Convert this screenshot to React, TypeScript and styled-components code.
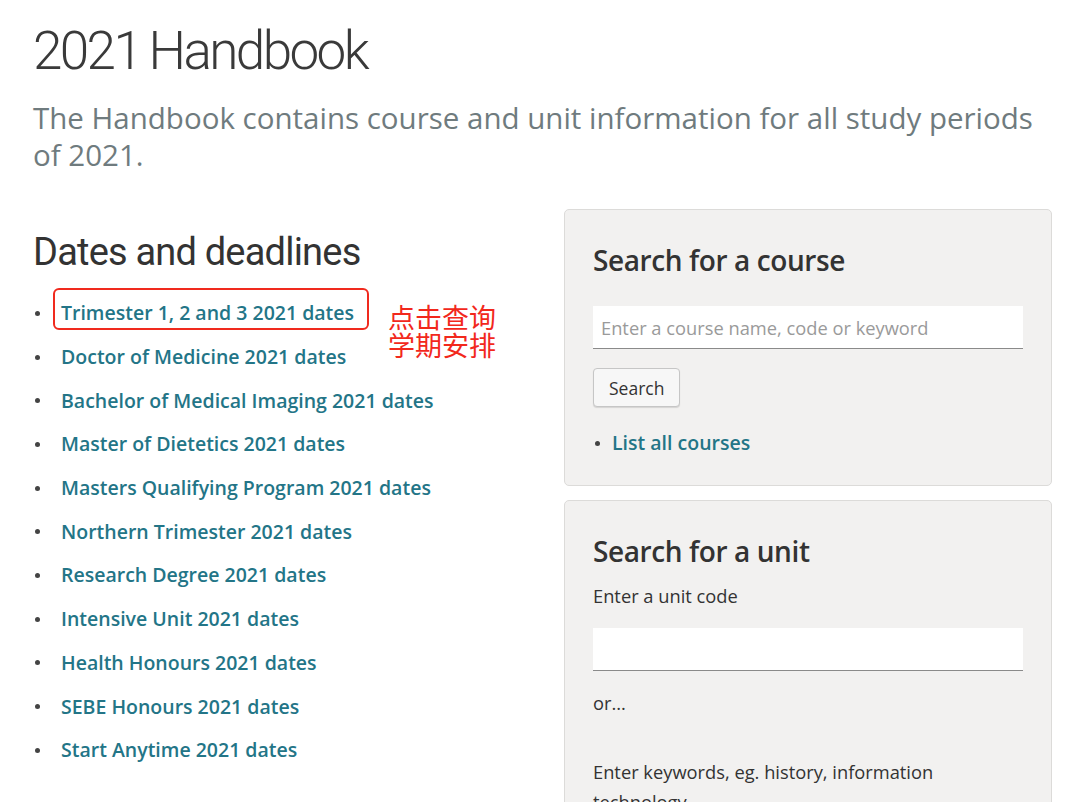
import React from 'react'
import styled, { createGlobalStyle } from 'styled-components'

const GlobalStyle = createGlobalStyle`
  html, body {
    margin: 0;
    padding: 0;
    background: #ffffff;
  }
  body {
    font-family: 'Open Sans', 'Noto Sans', sans-serif;
    color: #333333;
  }
`

const Page = styled.div`
  width: 1071px;
  height: 802px;
  overflow: hidden;
  box-sizing: border-box;
  padding: 19px 19px 0 33px;
`

const Title = styled.h1`
  margin: 0;
  font-family: 'Roboto', 'Liberation Sans', sans-serif;
  font-weight: 300;
  font-size: 53px;
  line-height: 64px;
  letter-spacing: -2.6px;
  word-spacing: -2px;
  color: #3a3a3a;
`

const Lead = styled.p`
  margin: 16px 0 0;
  font-size: 29.5px;
  line-height: 37px;
  color: #6f7b7e;
`

const Columns = styled.div`
  display: grid;
  grid-template-columns: 1fr 488px;
  column-gap: 24px;
  margin-top: 36px;
`

const LeftColumn = styled.section`
  padding-top: 19px;
`

const SectionTitle = styled.h2`
  margin: 0;
  font-family: 'Roboto', 'Liberation Sans', sans-serif;
  font-weight: 400;
  font-size: 38px;
  line-height: 48px;
  letter-spacing: -0.8px;
  color: #333333;
`

const LinkList = styled.ul`
  list-style: none;
  margin: 15px 0 0;
  padding: 0;
`

const LinkItem = styled.li<{ $tight?: boolean }>`
  position: relative;
  display: flex;
  align-items: center;
  height: 43.7px;
  padding-left: ${(p) => (p.$tight ? '19px' : '28px')};

  &::before {
    content: '';
    position: absolute;
    left: 2px;
    top: 50%;
    width: 5px;
    height: 5px;
    margin-top: -2px;
    border-radius: 50%;
    background: #444444;
  }
`

const DateLink = styled.a`
  font-size: 19.5px;
  font-weight: 600;
  color: #237587;
  text-decoration: none;
  white-space: nowrap;
`

const Highlight = styled.div`
  position: absolute;
  left: 20px;
  top: -3px;
  width: 312px;
  height: 38px;
  border: 2.5px solid #f02a1e;
  border-radius: 6px;
  pointer-events: none;
`

const Note = styled.div`
  position: absolute;
  left: 355px;
  top: 12px;
  font-family: 'Noto Sans CJK SC', sans-serif;
  font-size: 27px;
  line-height: 28px;
  color: #f2281c;
  white-space: nowrap;
`

const Sidebar = styled.aside`
  display: flex;
  flex-direction: column;
  gap: 14px;
`

const Panel = styled.div`
  background: #f2f1f0;
  border: 1px solid #dcdbd9;
  border-radius: 5px;
  padding: 30px 28px 20px 28px;
`

const PanelTitle = styled.h3`
  margin: 0;
  font-size: 28px;
  line-height: 40px;
  font-weight: 600;
  letter-spacing: -0.4px;
  color: #333333;
`

const TextField = styled.input<{ $gap?: number }>`
  display: block;
  box-sizing: border-box;
  width: 430px;
  height: 43px;
  margin-top: ${(p) => p.$gap ?? 26}px;
  padding: 0 8px;
  border: none;
  border-bottom: 1.5px solid #8a8a8a;
  background: #ffffff;
  font-family: 'Open Sans', sans-serif;
  font-size: 18.3px;
  color: #333333;
  outline: none;

  &::placeholder {
    color: #9a9a9a;
  }
`

const Button = styled.button`
  display: block;
  margin-top: 19px;
  height: 39px;
  padding: 0 15px;
  border: 1px solid #c6c6c6;
  border-radius: 4px;
  background: #f7f7f7;
  box-shadow: 0 1px 1px rgba(0, 0, 0, 0.12);
  font-family: 'Open Sans', sans-serif;
  font-size: 17.5px;
  color: #333333;
`

const PanelList = styled.ul`
  list-style: none;
  margin: 14px 0 0;
  padding: 0;
`

const Label = styled.p<{ $gap?: number }>`
  margin: ${(p) => p.$gap ?? 0}px 0 0;
  font-size: 18.3px;
  line-height: 30px;
  color: #333333;
`

const dates = [
  'Trimester 1, 2 and 3 2021 dates',
  'Doctor of Medicine 2021 dates',
  'Bachelor of Medical Imaging 2021 dates',
  'Master of Dietetics 2021 dates',
  'Masters Qualifying Program 2021 dates',
  'Northern Trimester 2021 dates',
  'Research Degree 2021 dates',
  'Intensive Unit 2021 dates',
  'Health Honours 2021 dates',
  'SEBE Honours 2021 dates',
  'Start Anytime 2021 dates',
]

export default function App() {
  return (
    <>
      <GlobalStyle />
      <Page>
        <Title>2021 Handbook</Title>
        <Lead>The Handbook contains course and unit information for all study periods of 2021.</Lead>
        <Columns>
          <LeftColumn>
            <SectionTitle>Dates and deadlines</SectionTitle>
            <LinkList>
              {dates.map((d, i) => (
                <LinkItem key={d}>
                  <DateLink href="#">{d}</DateLink>
                  {i === 0 && (
                    <>
                      <Highlight />
                      <Note>
                        点击查询
                        <br />
                        学期安排
                      </Note>
                    </>
                  )}
                </LinkItem>
              ))}
            </LinkList>
          </LeftColumn>
          <Sidebar>
            <Panel>
              <PanelTitle>Search for a course</PanelTitle>
              <TextField placeholder="Enter a course name, code or keyword" />
              <Button>Search</Button>
              <PanelList>
                <LinkItem $tight>
                  <DateLink href="#">List all courses</DateLink>
                </LinkItem>
              </PanelList>
            </Panel>
            <Panel>
              <PanelTitle>Search for a unit</PanelTitle>
              <Label $gap={10}>Enter a unit code</Label>
              <TextField $gap={17} />
              <Label $gap={17}>or...</Label>
              <Label $gap={39}>Enter keywords, eg. history, information technology</Label>
            </Panel>
          </Sidebar>
        </Columns>
      </Page>
    </>
  )
}
